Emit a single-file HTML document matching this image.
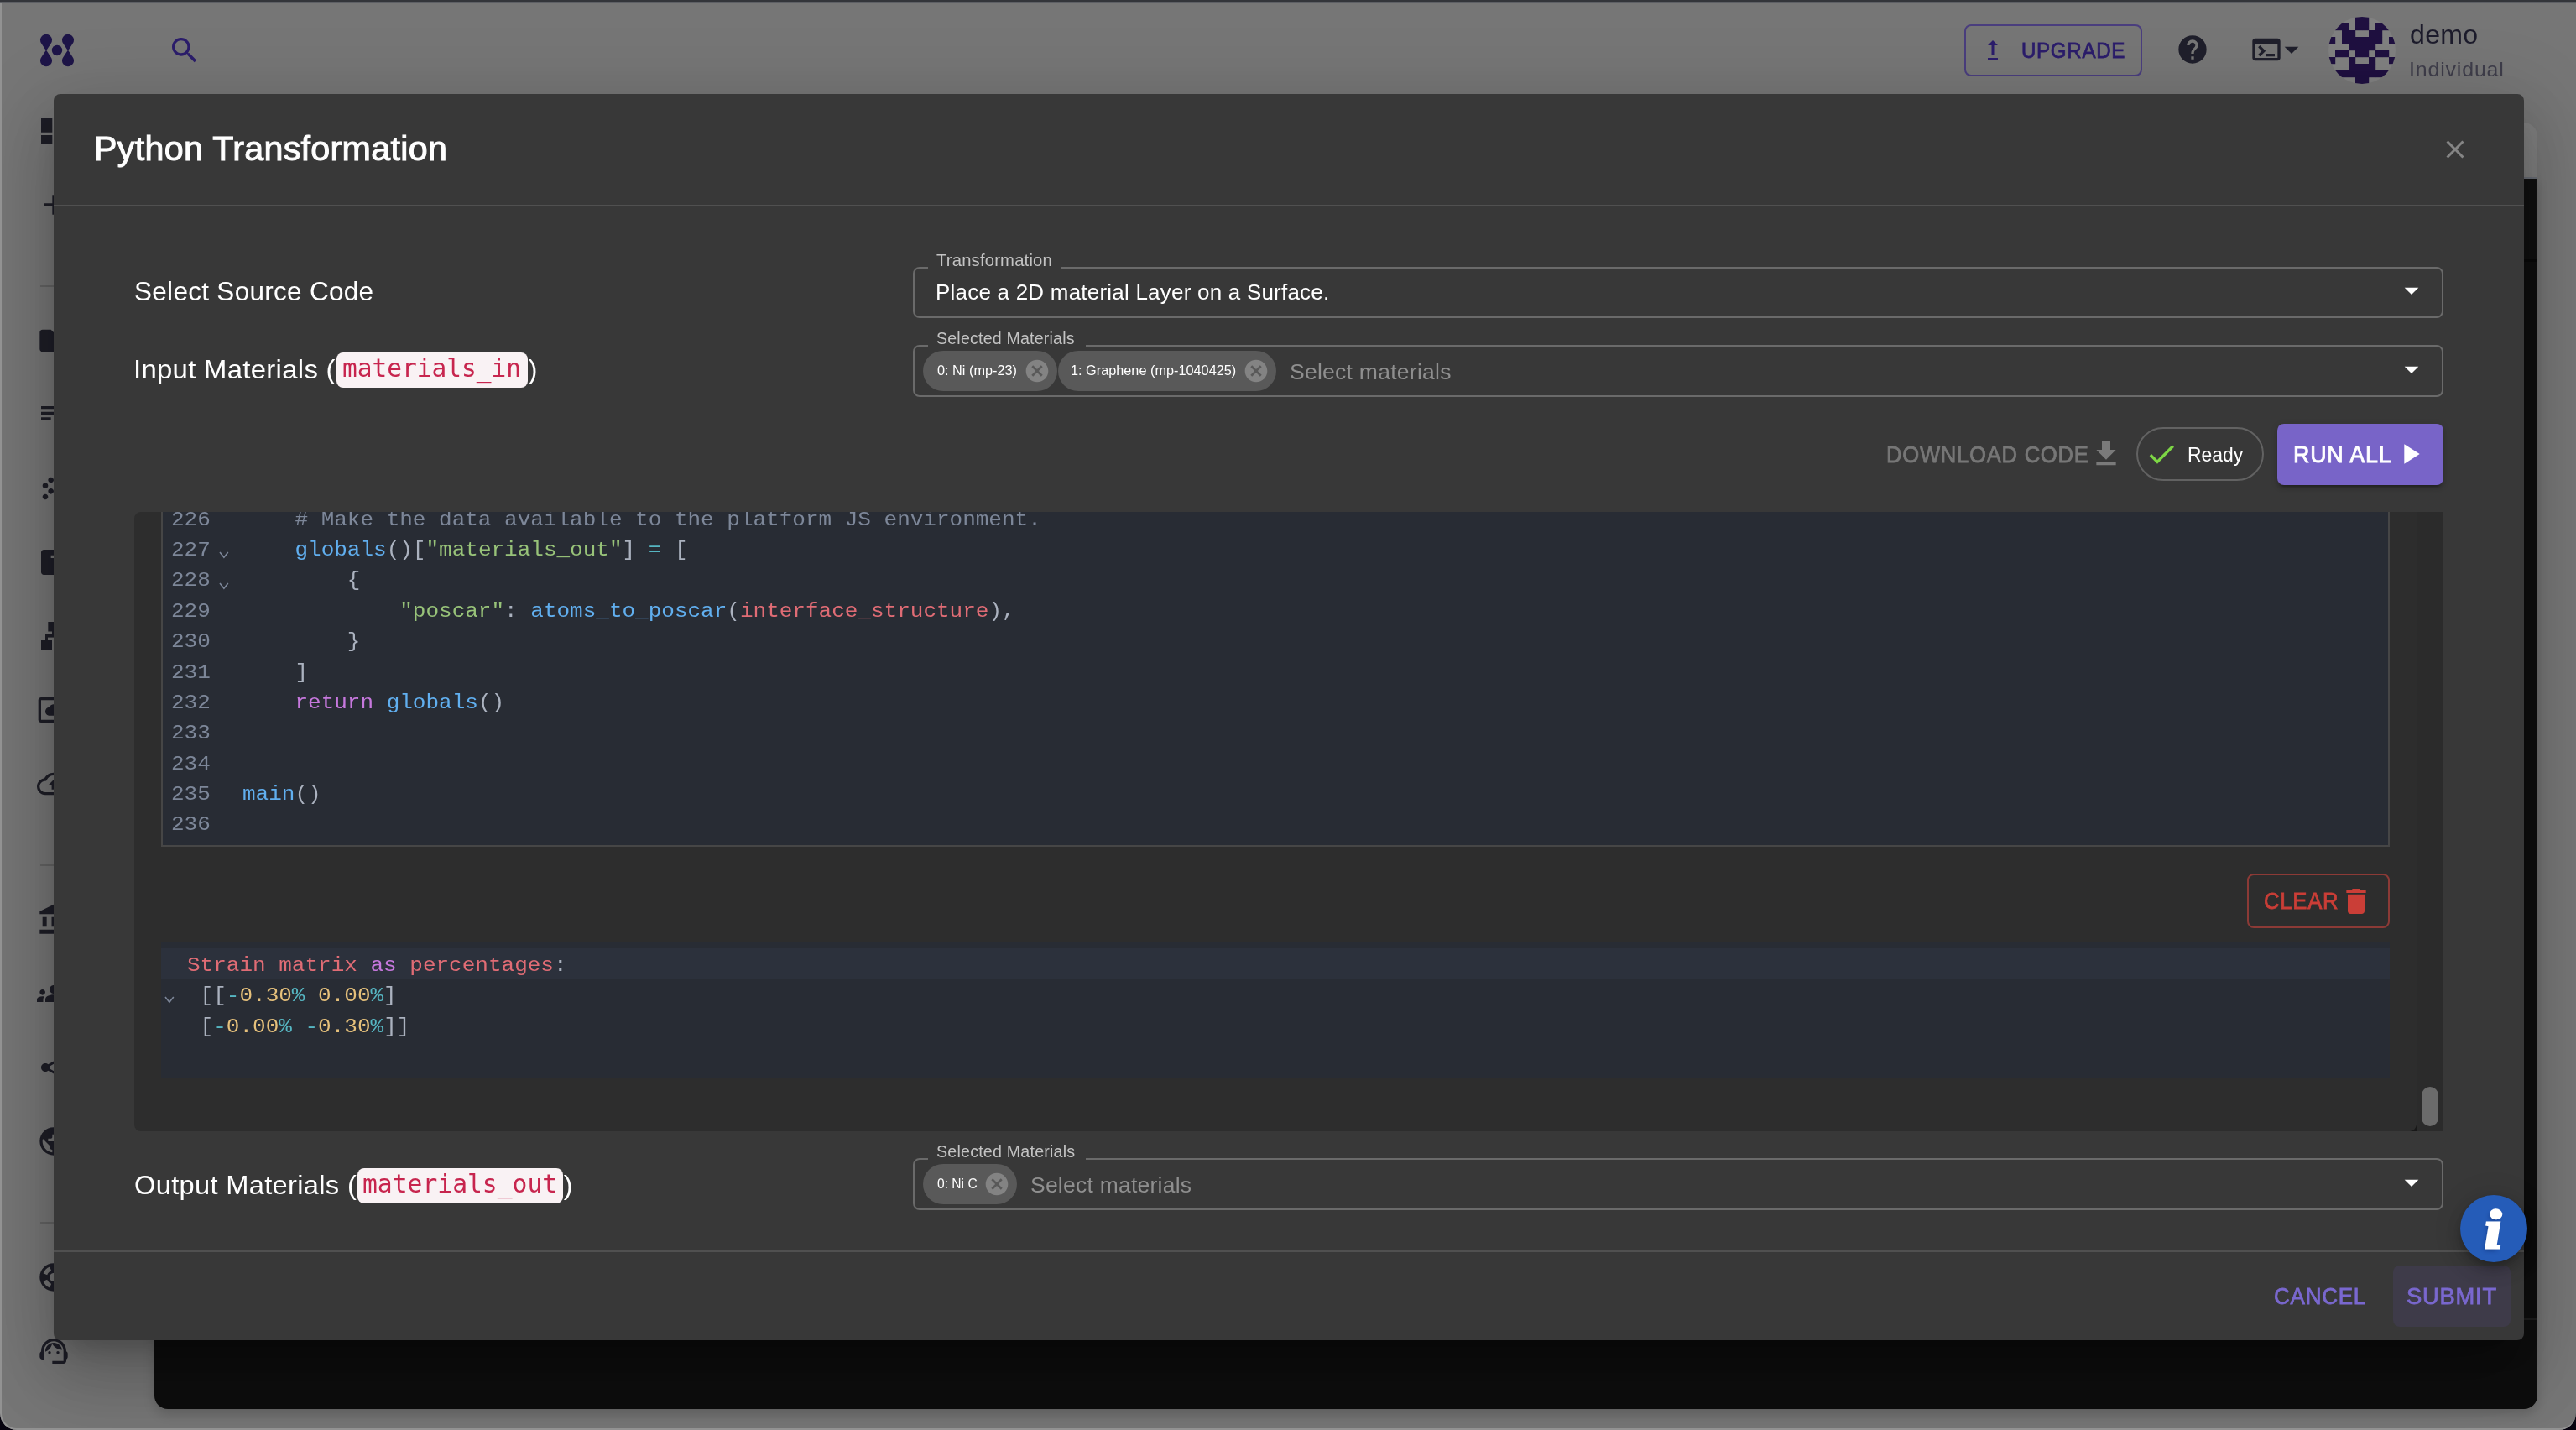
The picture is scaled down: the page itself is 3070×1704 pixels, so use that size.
<!DOCTYPE html>
<html lang="en"><head><meta charset="utf-8"><title>Python Transformation</title>
<style>
html,body{margin:0;padding:0}
body{width:3070px;height:1704px;background:#06030f;overflow:hidden;font-family:"Liberation Sans",sans-serif;position:relative}
#win{will-change:transform;position:absolute;left:0;top:0;width:3070px;height:1704px;background:#767676;border-radius:0 0 20px 20px;overflow:hidden}
#frame{position:absolute;left:0;top:4px;width:3070px;height:1700px;box-sizing:border-box;border-left:2px solid #929292;border-bottom:2px solid #929292;border-radius:0 0 20px 20px;pointer-events:none}
.b{position:absolute;box-sizing:border-box}
.ic{position:absolute;display:block;overflow:visible}
.t{position:absolute;white-space:nowrap;line-height:1;display:block;transform-origin:0 50%}
#modal{position:absolute;left:64px;top:112px;width:2944px;height:1485px;background:#383838;border-radius:8px;
 box-shadow:0 22px 30px -14px rgba(0,0,0,.2),0 48px 76px 6px rgba(0,0,0,.14),0 18px 92px 16px rgba(0,0,0,.12)}
.ed{background:#282c34;overflow:hidden;font-family:"Liberation Mono",monospace;font-size:23px;color:#abb2bf}
.ln{position:absolute;left:96.7px;height:36.37px;line-height:36.37px;white-space:pre;transform:scaleX(1.13043);transform-origin:0 0}
.no{position:absolute;left:-75.2px;width:41.4px;text-align:right;color:#7d8799}
</style></head>
<body>
<div id="win">
<div class="b" style="left:0;top:0;width:3070px;height:2px;background:#33353a"></div>
<div class="b" style="left:0;top:2px;width:3070px;height:2px;background:#5e6065"></div>
<svg class="ic" style="left:40px;top:32px" width="56" height="56" viewBox="40 32 56 56" fill="#1e1548"><path d="M55 60.4 L49.6 52.3 A7.05 7.05 0 1 1 60.4 52.3 Z"/><path d="M55 59.6 L49.6 67.7 A7.05 7.05 0 1 0 60.4 67.7 Z"/><path d="M81 60.4 L75.6 52.3 A7.05 7.05 0 1 1 86.4 52.3 Z"/><path d="M81 59.6 L75.6 67.7 A7.05 7.05 0 1 0 86.4 67.7 Z"/><circle cx="68" cy="60" r="6.2"/></svg>
<svg class="ic" style="left:200px;top:40px" width="40" height="40" viewBox="0 0 24 24" fill="#2b1d6b"><path d="M15.5 14h-.79l-.28-.27C15.41 12.59 16 11.11 16 9.5 16 5.91 13.09 3 9.5 3S3 5.91 3 9.5 5.91 16 9.5 16c1.61 0 3.09-.59 4.23-1.57l.27.28v.79l5 4.99L20.49 19l-4.99-5zm-6 0C7.01 14 5 11.99 5 9.5S7.01 5 9.5 5 14 7.01 14 9.5 11.99 14 9.5 14z"/></svg>
<div class="b" style="left:2341px;top:29px;width:212px;height:62px;border:2px solid #4a3e7e;border-radius:8px"></div>
<svg class="ic" style="left:2357px;top:42px" width="36" height="36" viewBox="0 0 24 24" fill="#2b1d6b"><path d="M16 18v2H8v-2h8zM11 7.99V16h2V7.99h3L12 4 8 7.99h3z"/></svg>
<span class="t" id="upg" style="left:2408.95px;top:47.19px;font-size:26px;color:#2b1d6b;letter-spacing:0.743px;transform:scaleX(0.9274);-webkit-text-stroke:0.8px #2b1d6b;">UPGRADE</span>
<svg class="ic" style="left:2593px;top:39px" width="40" height="40" viewBox="0 0 24 24" fill="#1f1f2b"><path d="M12 2C6.48 2 2 6.48 2 12s4.48 10 10 10 10-4.48 10-10S17.52 2 12 2zm1 17h-2v-2h2v2zm2.07-7.75l-.9.92C13.45 12.9 13 13.5 13 15h-2v-.5c0-1.1.45-2.1 1.17-2.83l1.24-1.26c.37-.36.59-.86.59-1.41 0-1.1-.9-2-2-2s-2 .9-2 2H8c0-2.21 1.79-4 4-4s4 1.79 4 4c0 .88-.36 1.68-.93 2.25z"/></svg>
<svg class="ic" style="left:2681px;top:39px" width="40" height="40" viewBox="0 0 24 24" fill="#1f1f2b"><path d="M20 4H4c-1.11 0-2 .9-2 2v12c0 1.1.89 2 2 2h16c1.1 0 2-.9 2-2V6c0-1.1-.89-2-2-2zm0 14H4V8h16v10zm-2-1h-6v-2h6v2zM7.5 17l-1.41-1.41L8.67 13l-2.59-2.59L7.5 9l4 4-4 4z"/></svg>
<svg class="ic" style="left:2711px;top:39px" width="40" height="40" viewBox="0 0 24 24" fill="#1f1f2b"><path d="M7 10l5 5 5-5z"/></svg>
<div class="b" style="left:2775px;top:20px;width:80px;height:80px;border-radius:40px;overflow:hidden;background:#808080"><svg class="ic" style="left:0;top:0" width="80" height="80" viewBox="0 0 80 80"><g fill="#1f1040"><rect x="32" y="0" width="8.2" height="8.2"/><rect x="40" y="0" width="8.2" height="8.2"/><rect x="8" y="8" width="8.2" height="8.2"/><rect x="16" y="8" width="8.2" height="8.2"/><rect x="32" y="8" width="8.2" height="8.2"/><rect x="40" y="8" width="8.2" height="8.2"/><rect x="56" y="8" width="8.2" height="8.2"/><rect x="64" y="8" width="8.2" height="8.2"/><rect x="16" y="16" width="8.2" height="8.2"/><rect x="24" y="16" width="8.2" height="8.2"/><rect x="48" y="16" width="8.2" height="8.2"/><rect x="56" y="16" width="8.2" height="8.2"/><rect x="0" y="24" width="8.2" height="8.2"/><rect x="16" y="24" width="8.2" height="8.2"/><rect x="24" y="24" width="8.2" height="8.2"/><rect x="32" y="24" width="8.2" height="8.2"/><rect x="40" y="24" width="8.2" height="8.2"/><rect x="48" y="24" width="8.2" height="8.2"/><rect x="56" y="24" width="8.2" height="8.2"/><rect x="72" y="24" width="8.2" height="8.2"/><rect x="24" y="32" width="8.2" height="8.2"/><rect x="32" y="32" width="8.2" height="8.2"/><rect x="40" y="32" width="8.2" height="8.2"/><rect x="48" y="32" width="8.2" height="8.2"/><rect x="8" y="40" width="8.2" height="8.2"/><rect x="16" y="40" width="8.2" height="8.2"/><rect x="32" y="40" width="8.2" height="8.2"/><rect x="40" y="40" width="8.2" height="8.2"/><rect x="56" y="40" width="8.2" height="8.2"/><rect x="64" y="40" width="8.2" height="8.2"/><rect x="0" y="48" width="8.2" height="8.2"/><rect x="24" y="48" width="8.2" height="8.2"/><rect x="48" y="48" width="8.2" height="8.2"/><rect x="72" y="48" width="8.2" height="8.2"/><rect x="24" y="56" width="8.2" height="8.2"/><rect x="32" y="56" width="8.2" height="8.2"/><rect x="40" y="56" width="8.2" height="8.2"/><rect x="48" y="56" width="8.2" height="8.2"/><rect x="8" y="64" width="8.2" height="8.2"/><rect x="16" y="64" width="8.2" height="8.2"/><rect x="24" y="64" width="8.2" height="8.2"/><rect x="32" y="64" width="8.2" height="8.2"/><rect x="40" y="64" width="8.2" height="8.2"/><rect x="48" y="64" width="8.2" height="8.2"/><rect x="56" y="64" width="8.2" height="8.2"/><rect x="64" y="64" width="8.2" height="8.2"/><rect x="32" y="72" width="8.2" height="8.2"/><rect x="40" y="72" width="8.2" height="8.2"/></g></svg></div>
<span class="t" id="demo" style="left:2871.60px;top:24.71px;font-size:32px;color:#1d1c2c;letter-spacing:0.300px;transform:scaleX(1.0032);">demo</span>
<span class="t" id="indiv" style="left:2870.52px;top:71.48px;font-size:24px;color:#3e3d4a;letter-spacing:0.800px;transform:scaleX(1.0392);">Individual</span>
<svg class="ic" style="left:44px;top:136px" width="40" height="40" viewBox="0 0 24 24" fill="#1e1e27"><path d="M3 13h8V3H3v10zm0 8h8v-6H3v6zm10 0h8V11h-8v10zm0-18v6h8V3h-8z"/></svg>
<svg class="ic" style="left:44px;top:224px" width="40" height="40" viewBox="0 0 24 24" fill="#1e1e27"><path d="M19 13h-6v6h-2v-6H5v-2h6V5h2v6h6v2z"/></svg>
<svg class="ic" style="left:44px;top:386px" width="40" height="40" viewBox="0 0 24 24" fill="#1e1e27"><path d="M10 4H4c-1.1 0-1.99.9-1.99 2L2 18c0 1.1.9 2 2 2h16c1.1 0 2-.9 2-2V8c0-1.1-.9-2-2-2h-8l-2-2z"/></svg>
<svg class="ic" style="left:44px;top:474px" width="40" height="40" viewBox="0 0 24 24" fill="#1e1e27"><path d="M3 10h11v2H3zm0-4h11v2H3zm0 8h7v2H3zm13-1v8l6-5z"/></svg>
<svg class="ic" style="left:44px;top:562px" width="40" height="40" viewBox="0 0 24 24" fill="#1e1e27"><path d="M10 12c-1.1 0-2 .9-2 2s.9 2 2 2 2-.9 2-2-.9-2-2-2zM6 8c-1.1 0-2 .9-2 2s.9 2 2 2 2-.9 2-2-.9-2-2-2zm0 8c-1.1 0-2 .9-2 2s.9 2 2 2 2-.9 2-2-.9-2-2-2zm12-8c1.1 0 2-.9 2-2s-.9-2-2-2-2 .9-2 2 .9 2 2 2zm-4 8c-1.1 0-2 .9-2 2s.9 2 2 2 2-.9 2-2-.9-2-2-2zm4-4c-1.1 0-2 .9-2 2s.9 2 2 2 2-.9 2-2-.9-2-2-2zm-4-4c-1.1 0-2 .9-2 2s.9 2 2 2 2-.9 2-2-.9-2-2-2zm-4-4c-1.1 0-2 .9-2 2s.9 2 2 2 2-.9 2-2-.9-2-2-2z"/></svg>
<svg class="ic" style="left:44px;top:650px" width="40" height="40" viewBox="0 0 24 24" fill="#1e1e27"><path d="M19 3H5c-1.1 0-2 .9-2 2v14c0 1.1.9 2 2 2h14c1.1 0 2-.9 2-2V5c0-1.1-.9-2-2-2zM12 9h-2V7h2v2z"/></svg>
<svg class="ic" style="left:44px;top:826px" width="40" height="40" viewBox="0 0 24 24" fill="#1e1e27"><path d="M9 16h6.5c1.38 0 2.5-1.12 2.5-2.5S16.88 11 15.5 11h-.05c-.24-1.69-1.69-3-3.45-3-1.4 0-2.6.83-3.16 2.02h-.16C7.17 10.18 6 11.45 6 13c0 1.66 1.34 3 3 3zM21 3H3c-1.1 0-2 .9-2 2v14c0 1.1.9 2 2 2h18c1.1 0 2-.9 2-2V5c0-1.1-.9-2-2-2zm0 16.01H3V4.99h18v14.02z"/></svg>
<svg class="ic" style="left:44px;top:914px" width="40" height="40" viewBox="0 0 24 24" fill="#1e1e27"><path d="M19.35 10.04C18.67 6.59 15.64 4 12 4 9.11 4 6.6 5.64 5.35 8.04 2.34 8.36 0 10.91 0 14c0 3.31 2.69 6 6 6h13c2.76 0 5-2.24 5-5 0-2.64-2.05-4.78-4.65-4.96zM19 18H6c-2.21 0-4-1.79-4-4 0-2.05 1.53-3.76 3.56-3.97l1.07-.11.5-.95C8.08 7.14 9.94 6 12 6c2.62 0 4.88 1.86 5.39 4.43l.3 1.5 1.53.11c1.56.1 2.78 1.41 2.78 2.96 0 1.65-1.35 3-3 3zM8 13h2.55v3h2.9v-3H16l-4-4z"/></svg>
<svg class="ic" style="left:44px;top:1076px" width="40" height="40" viewBox="0 0 24 24" fill="#1e1e27"><path d="M4 10h3v7H4zm6.5 0h3v7h-3zM2 19h20v3H2zm15-9h3v7h-3zm-5-9L2 6v2h20V6z"/></svg>
<svg class="ic" style="left:44px;top:1164px" width="40" height="40" viewBox="0 0 24 24" fill="#1e1e27"><path d="M12 12.75c1.63 0 3.07.39 4.24.9 1.08.48 1.76 1.56 1.76 2.73V18H6v-1.61c0-1.18.68-2.26 1.76-2.73 1.17-.52 2.61-.91 4.24-.91zM4 13c1.1 0 2-.9 2-2s-.9-2-2-2-2 .9-2 2 .9 2 2 2zm1.13 1.1c-.37-.06-.74-.1-1.13-.1-.99 0-1.93.21-2.78.58C.48 14.9 0 15.62 0 16.43V18h4.5v-1.61c0-.83.23-1.61.63-2.29zM20 13c1.1 0 2-.9 2-2s-.9-2-2-2-2 .9-2 2 .9 2 2 2zm4 3.43c0-.81-.48-1.53-1.22-1.85-.85-.37-1.79-.58-2.78-.58-.39 0-.76.04-1.13.1.4.68.63 1.46.63 2.29V18H24v-1.57zM12 6c1.66 0 3 1.34 3 3s-1.34 3-3 3-3-1.34-3-3 1.34-3 3-3z"/></svg>
<svg class="ic" style="left:44px;top:1252px" width="40" height="40" viewBox="0 0 24 24" fill="#1e1e27"><path d="M18 16.08c-.76 0-1.44.3-1.96.77L8.91 12.7c.05-.23.09-.46.09-.7s-.04-.47-.09-.7l7.05-4.11c.54.5 1.25.81 2.04.81 1.66 0 3-1.34 3-3s-1.34-3-3-3-3 1.34-3 3c0 .24.04.47.09.7L8.04 9.81C7.5 9.31 6.79 9 6 9c-1.66 0-3 1.34-3 3s1.34 3 3 3c.79 0 1.5-.31 2.04-.81l7.12 4.16c-.05.21-.08.43-.08.65 0 1.61 1.31 2.92 2.92 2.92 1.61 0 2.92-1.31 2.92-2.92s-1.31-2.92-2.92-2.92z"/></svg>
<svg class="ic" style="left:44px;top:1340px" width="40" height="40" viewBox="0 0 24 24" fill="#1e1e27"><path d="M12 2C6.48 2 2 6.48 2 12s4.48 10 10 10 10-4.48 10-10S17.52 2 12 2zm-1 17.93c-3.95-.49-7-3.85-7-7.93 0-.62.08-1.21.21-1.79L9 15v1c0 1.1.9 2 2 2v1.93zm6.9-2.54c-.26-.81-1-1.39-1.9-1.39h-1v-3c0-.55-.45-1-1-1H8v-2h2c.55 0 1-.45 1-1V7h2c1.1 0 2-.9 2-2v-.41c2.93 1.19 5 4.06 5 7.41 0 2.08-.8 3.97-2.1 5.39z"/></svg>
<svg class="ic" style="left:44px;top:1502px" width="40" height="40" viewBox="0 0 24 24" fill="#1e1e27"><path d="M12 2C6.48 2 2 6.48 2 12s4.48 10 10 10 10-4.48 10-10S17.52 2 12 2zm7.46 7.12-2.78 1.15c-.51-1.36-1.58-2.44-2.95-2.94l1.15-2.78c2.1.8 3.77 2.47 4.58 4.57zM12 15c-1.66 0-3-1.34-3-3s1.34-3 3-3 3 1.34 3 3-1.34 3-3 3zM9.13 4.54l1.17 2.78c-1.38.5-2.47 1.59-2.98 2.97L4.54 9.13c.81-2.11 2.48-3.78 4.59-4.59zM4.54 14.87l2.78-1.15c.51 1.38 1.59 2.46 2.97 2.96l-1.17 2.78c-2.1-.81-3.77-2.48-4.58-4.59zm10.34 4.59-1.15-2.78c1.37-.51 2.45-1.59 2.95-2.97l2.78 1.17c-.81 2.1-2.48 3.77-4.58 4.58z"/></svg>
<svg class="ic" style="left:44px;top:738px" width="40" height="40" viewBox="0 0 40 40" fill="#1e1e27"><rect x="13.3" y="3" width="14" height="11.5"/><rect x="5" y="25" width="13" height="11.5"/><rect x="18" y="14" width="3" height="5"/><rect x="10" y="18" width="11" height="3.6"/><rect x="10" y="18" width="3" height="8"/></svg>
<svg class="ic" style="left:44px;top:1590px" width="40" height="40" viewBox="0 0 24 24" fill="#1e1e27"><path d="M21 12.22C21 6.73 16.74 3 12 3c-4.69 0-9 3.65-9 9.28-.6.34-1 .98-1 1.72v2c0 1.1.9 2 2 2h1v-6.1c0-3.87 3.13-7 7-7s7 3.13 7 7V19h-8v2h8c1.1 0 2-.9 2-2v-1.22c.59-.31 1-.92 1-1.64v-2.3c0-.7-.41-1.31-1-1.62zM18 11.03C17.52 8.18 15.04 6 12.05 6c-3.03 0-6.29 2.51-6.03 6.45 2.47-1.01 4.33-3.21 4.86-5.89 1.31 2.63 4 4.44 7.12 4.47z"/><circle cx="9" cy="13" r="1"/><circle cx="15" cy="13" r="1"/></svg>
<div class="b" style="left:48px;top:340px;width:40px;height:2px;background:#646464"></div>
<div class="b" style="left:48px;top:1030px;width:40px;height:2px;background:#646464"></div>
<div class="b" style="left:48px;top:1456px;width:40px;height:2px;background:#646464"></div>
<div class="b" style="left:184px;top:146px;width:2840px;height:65px;border-radius:16px 16px 0 0;background:#7f7f7f"></div>
<div class="b" style="left:184px;top:211px;width:2840px;height:2px;background:#6c7078"></div>
<div class="b" style="left:184px;top:213px;width:2840px;height:1466px;border-radius:0 0 16px 16px;background:#0e0e0e;overflow:hidden;box-shadow:0 6px 14px rgba(0,0,0,.16)"><div class="b" style="left:0;top:0;width:2840px;height:96px;background:#111"></div><div class="b" style="left:0;top:96px;width:2840px;height:3px;background:#090909"></div><div class="b" style="left:0;top:1358px;width:2840px;height:2px;background:#1e1e1e"></div></div>
<div id="modal"></div>
<span class="t" id="title" style="left:112.31px;top:157.14px;font-size:40px;color:#ffffff;letter-spacing:0.300px;transform:scaleX(1.0305);-webkit-text-stroke:1.0px #ffffff;">Python Transformation</span>
<svg class="ic" style="left:2908px;top:160px" width="36" height="36" viewBox="0 0 24 24" fill="#858585"><path d="M19 6.41 17.59 5 12 10.59 6.41 5 5 6.41 10.59 12 5 17.59 6.41 19 12 13.41 17.59 19 19 17.59 13.41 12z"/></svg>
<div class="b" style="left:64px;top:244px;width:2944px;height:2px;background:#505050"></div>
<div class="b" style="left:64px;top:1490px;width:2944px;height:2px;background:#505050"></div>
<span class="t" id="l1" style="left:160.02px;top:330.71px;font-size:32px;color:#ffffff;letter-spacing:0.300px;transform:scaleX(0.9840);">Select Source Code</span>
<span class="t" id="l2" style="left:158.95px;top:423.91px;font-size:32px;color:#ffffff;letter-spacing:0.300px;transform:scaleX(1.0268);">Input Materials (</span>
<div class="b" style="left:401px;top:420px;width:228px;height:42px;border-radius:8px;background:#f9f2f4"></div>
<span class="t" id="c2" style="left:408.00px;top:425.08px;font-size:29.4px;color:#c7254e;transform:scaleX(1.0031);font-family:'DejaVu Sans Mono', 'Liberation Mono', monospace;">materials_in</span>
<span class="t" id="l2b" style="left:629.80px;top:423.91px;font-size:32px;color:#ffffff;">)</span>
<span class="t" id="l3" style="left:159.68px;top:1395.71px;font-size:32px;color:#ffffff;letter-spacing:0.300px;transform:scaleX(1.0206);">Output Materials (</span>
<div class="b" style="left:426px;top:1392px;width:245px;height:42px;border-radius:8px;background:#f9f2f4"></div>
<span class="t" id="c3" style="left:431.99px;top:1396.88px;font-size:29.4px;color:#c7254e;transform:scaleX(1.0091);font-family:'DejaVu Sans Mono', 'Liberation Mono', monospace;">materials_out</span>
<span class="t" id="l3b" style="left:671.80px;top:1395.71px;font-size:32px;color:#ffffff;">)</span>
<div class="b" style="left:1088px;top:318px;width:1824px;height:61px;border:2px solid #6a6a6a;border-radius:8px;box-sizing:border-box"></div><div class="b" style="left:1106px;top:316px;width:159px;height:6px;background:#383838"></div><span class="t" id="fl1" style="left:1116.30px;top:301.29px;font-size:19.5px;color:#c3c3c3;letter-spacing:0.183px;transform:scaleX(1.0376);">Transformation</span>
<div class="b" style="left:1088px;top:411px;width:1824px;height:62px;border:2px solid #6a6a6a;border-radius:8px;box-sizing:border-box"></div><div class="b" style="left:1106px;top:409px;width:188px;height:6px;background:#383838"></div><span class="t" id="fl2" style="left:1115.90px;top:394.09px;font-size:19.5px;color:#c3c3c3;letter-spacing:0.183px;transform:scaleX(1.0063);">Selected Materials</span>
<div class="b" style="left:1088px;top:1380px;width:1824px;height:62px;border:2px solid #6a6a6a;border-radius:8px;box-sizing:border-box"></div><div class="b" style="left:1106px;top:1378px;width:188px;height:6px;background:#383838"></div><span class="t" id="fl3" style="left:1115.70px;top:1362.99px;font-size:19.5px;color:#c3c3c3;letter-spacing:0.183px;transform:scaleX(1.0100);">Selected Materials</span>
<span class="t" id="fv1" style="left:1115.00px;top:335.49px;font-size:26px;color:#ffffff;letter-spacing:0.244px;transform:scaleX(0.9977);">Place a 2D material Layer on a Surface.</span>
<svg class="ic" style="left:2854px;top:326px" width="40" height="40" viewBox="0 0 24 24" fill="#ffffff"><path d="M7 10l5 5 5-5z"/></svg>
<svg class="ic" style="left:2854px;top:420px" width="40" height="40" viewBox="0 0 24 24" fill="#ffffff"><path d="M7 10l5 5 5-5z"/></svg>
<svg class="ic" style="left:2854px;top:1389px" width="40" height="40" viewBox="0 0 24 24" fill="#ffffff"><path d="M7 10l5 5 5-5z"/></svg>
<div class="b" style="left:1100px;top:418px;width:160px;height:48px;border-radius:24px;background:#595959"></div><span class="t" id="ch1" style="left:1116.70px;top:432.91px;font-size:17px;color:#ffffff;transform:scaleX(0.9571);">0: Ni (mp-23)</span><svg class="ic" style="left:1220px;top:426.1px" width="32" height="32" viewBox="0 0 24 24" fill="#838383"><path d="M12 2C6.47 2 2 6.47 2 12s4.47 10 10 10 10-4.47 10-10S17.53 2 12 2zm5 13.59L15.59 17 12 13.41 8.41 17 7 15.59 10.59 12 7 8.41 8.41 7 12 10.59 15.59 7 17 8.41 13.41 12 17 15.59z"/></svg>
<div class="b" style="left:1261px;top:418px;width:260px;height:48px;border-radius:24px;background:#595959"></div><span class="t" id="ch2" style="left:1275.84px;top:432.91px;font-size:17px;color:#ffffff;transform:scaleX(0.9572);">1: Graphene (mp-1040425)</span><svg class="ic" style="left:1481px;top:426.1px" width="32" height="32" viewBox="0 0 24 24" fill="#838383"><path d="M12 2C6.47 2 2 6.47 2 12s4.47 10 10 10 10-4.47 10-10S17.53 2 12 2zm5 13.59L15.59 17 12 13.41 8.41 17 7 15.59 10.59 12 7 8.41 8.41 7 12 10.59 15.59 7 17 8.41 13.41 12 17 15.59z"/></svg>
<span class="t" id="ph2" style="left:1536.98px;top:429.99px;font-size:26px;color:#8f8f8f;letter-spacing:0.244px;transform:scaleX(1.0202);">Select materials</span>
<div class="b" style="left:1100px;top:1387px;width:112px;height:48px;border-radius:24px;background:#595959"></div><span class="t" id="ch3" style="left:1116.50px;top:1401.61px;font-size:17px;color:#ffffff;transform:scaleX(0.9172);">0: Ni C</span><svg class="ic" style="left:1172.2px;top:1394.9px" width="32" height="32" viewBox="0 0 24 24" fill="#838383"><path d="M12 2C6.47 2 2 6.47 2 12s4.47 10 10 10 10-4.47 10-10S17.53 2 12 2zm5 13.59L15.59 17 12 13.41 8.41 17 7 15.59 10.59 12 7 8.41 8.41 7 12 10.59 15.59 7 17 8.41 13.41 12 17 15.59z"/></svg>
<span class="t" id="ph3" style="left:1227.98px;top:1398.69px;font-size:26px;color:#8f8f8f;letter-spacing:0.244px;transform:scaleX(1.0180);">Select materials</span>
<span class="t" id="dl" style="left:2248.44px;top:528.32px;font-size:27.5px;color:#777777;letter-spacing:0.786px;transform:scaleX(0.9319);-webkit-text-stroke:0.8px #777777;">DOWNLOAD CODE</span>
<svg class="ic" style="left:2490px;top:521px" width="40" height="40" viewBox="0 0 24 24" fill="#7a7a7a"><path d="M19 9h-4V3H9v6H5l7 7 7-7zM5 18v2h14v-2H5z"/></svg>
<div class="b" style="left:2546px;top:509px;width:152px;height:64px;border:2px solid #626262;border-radius:32px;box-sizing:border-box"></div>
<svg class="ic" style="left:2556px;top:521px" width="40" height="40" viewBox="0 0 24 24" fill="#7dd645"><path d="M9 16.17 4.83 12l-1.42 1.41L9 19 21 7l-1.41-1.41z"/></svg>
<span class="t" id="ready" style="left:2606.55px;top:529.68px;font-size:24px;color:#ffffff;transform:scaleX(0.9550);">Ready</span>
<div class="b" style="left:2714px;top:505px;width:198px;height:73px;border-radius:8px;background:#7864c8;box-shadow:0 6px 2px -4px rgba(0,0,0,.2),0 4px 4px 0 rgba(0,0,0,.14),0 2px 10px 0 rgba(0,0,0,.12)"></div>
<span class="t" id="run" style="left:2732.95px;top:528.32px;font-size:27.5px;color:#ffffff;letter-spacing:0.786px;transform:scaleX(0.9775);-webkit-text-stroke:0.8px #ffffff;">RUN ALL</span>
<svg class="ic" style="left:2852px;top:521px" width="40" height="40" viewBox="0 0 24 24" fill="#ffffff"><path d="M8 5v14l11-7z"/></svg>
<div class="b" style="left:160px;top:610px;width:2752px;height:738px;border-radius:8px 0 0 8px;background:#2d2d2d"></div>
<div class="b" style="left:2880px;top:610px;width:32px;height:738px;background:#2b2b2b"></div>
<div class="b" style="left:2886px;top:1295px;width:20px;height:47px;border-radius:10px;background:#6b6b6b"></div>
<svg class="ic" style="left:2868px;top:1336px" width="12" height="12" viewBox="0 0 12 12"><path d="M12 4 V12 H4 Q11 11 12 4Z" fill="#181818"/></svg>
<div class="b ed" style="left:192px;top:610px;width:2656px;height:399px"><div class="ln" style="top:-8.32px"><span class="no">226</span>    <span style="color:#7d8799"># Make the data available to the platform JS environment.</span></div><div class="ln" style="top:28.05px"><span class="no">227</span>    <span style="color:#61afef">globals</span><span style="color:#abb2bf">()[</span><span style="color:#98c379">&quot;materials_out&quot;</span><span style="color:#abb2bf">] </span><span style="color:#56b6c2">=</span><span style="color:#abb2bf"> [</span></div><svg class="ic" style="left:68.6px;top:47.2px" width="12" height="9" viewBox="0 0 12 9"><path d="M1 1 L5.9 7.2 L10.8 1" fill="none" stroke="#7d8799" stroke-width="1.6"/></svg><div class="ln" style="top:64.42px"><span class="no">228</span>        <span style="color:#abb2bf">{</span></div><svg class="ic" style="left:68.6px;top:83.5px" width="12" height="9" viewBox="0 0 12 9"><path d="M1 1 L5.9 7.2 L10.8 1" fill="none" stroke="#7d8799" stroke-width="1.6"/></svg><div class="ln" style="top:100.79px"><span class="no">229</span>            <span style="color:#98c379">&quot;poscar&quot;</span><span style="color:#abb2bf">: </span><span style="color:#61afef">atoms_to_poscar</span><span style="color:#abb2bf">(</span><span style="color:#e06c75">interface_structure</span><span style="color:#abb2bf">),</span></div><div class="ln" style="top:137.16px"><span class="no">230</span>        <span style="color:#abb2bf">}</span></div><div class="ln" style="top:173.53px"><span class="no">231</span>    <span style="color:#abb2bf">]</span></div><div class="ln" style="top:209.90px"><span class="no">232</span>    <span style="color:#c678dd">return</span> <span style="color:#61afef">globals</span><span style="color:#abb2bf">()</span></div><div class="ln" style="top:246.27px"><span class="no">233</span></div><div class="ln" style="top:282.64px"><span class="no">234</span></div><div class="ln" style="top:319.01px"><span class="no">235</span><span style="color:#61afef">main</span><span style="color:#abb2bf">()</span></div><div class="ln" style="top:355.38px"><span class="no">236</span></div><div class="b" style="left:0;top:0;width:2px;height:399px;background:#464646"></div><div class="b" style="left:2654px;top:0;width:2px;height:399px;background:#464646"></div><div class="b" style="left:0;top:397px;width:2656px;height:2px;background:#464646"></div></div>
<div class="b" style="left:2678px;top:1041px;width:170px;height:65px;border:2px solid #8c3a36;border-radius:8px;box-sizing:border-box"></div>
<span class="t" id="clear" style="left:2698.47px;top:1060.02px;font-size:27.5px;color:#ca3e37;letter-spacing:0.786px;transform:scaleX(0.9335);-webkit-text-stroke:0.8px #ca3e37;">CLEAR</span>
<svg class="ic" style="left:2788px;top:1054px" width="40" height="40" viewBox="0 0 24 24" fill="#ca3e37"><path d="M6 19c0 1.1.9 2 2 2h8c1.1 0 2-.9 2-2V7H6v12zM19 4h-3.5l-1-1h-5l-1 1H5v2h14V4z"/></svg>
<div class="b ed" style="left:192px;top:1122.4px;width:2656px;height:161.2px"><div class="b" style="left:0;top:7.6px;width:2656px;height:36.2px;background:#2c313c"></div><div class="ln" style="top:10.68px;left:31.3px"><span style="color:#e06c75">Strain</span> <span style="color:#e06c75">matrix</span> <span style="color:#c678dd">as</span> <span style="color:#e06c75">percentages</span><span style="color:#abb2bf">:</span></div><div class="ln" style="top:47.05px;left:31.3px"> <span style="color:#abb2bf">[[</span><span style="color:#56b6c2">-</span><span style="color:#e5c07b">0.30</span><span style="color:#56b6c2">%</span> <span style="color:#e5c07b">0.00</span><span style="color:#56b6c2">%</span><span style="color:#abb2bf">]</span></div><div class="ln" style="top:83.42px;left:31.3px"> <span style="color:#abb2bf">[</span><span style="color:#56b6c2">-</span><span style="color:#e5c07b">0.00</span><span style="color:#56b6c2">%</span> <span style="color:#56b6c2">-</span><span style="color:#e5c07b">0.30</span><span style="color:#56b6c2">%</span><span style="color:#abb2bf">]]</span></div><svg class="ic" style="left:4.2px;top:64.8px" width="12" height="9" viewBox="0 0 12 9"><path d="M1 1 L5.9 7.2 L10.8 1" fill="none" stroke="#7d8799" stroke-width="1.6"/></svg></div>
<span class="t" id="cancel" style="left:2709.85px;top:1531.22px;font-size:27.5px;color:#7a68cf;letter-spacing:0.786px;transform:scaleX(0.9467);-webkit-text-stroke:0.8px #7a68cf;">CANCEL</span>
<div class="b" style="left:2852px;top:1508px;width:140px;height:73px;border-radius:8px;background:#3e3b49"></div>
<span class="t" id="submit" style="left:2868.01px;top:1531.22px;font-size:27.5px;color:#7a68cf;letter-spacing:0.786px;transform:scaleX(0.9942);-webkit-text-stroke:0.8px #7a68cf;">SUBMIT</span>
<div class="b" style="left:2932px;top:1424px;width:80px;height:80px;border-radius:40px;background:#255cb8;box-shadow:0 6px 10px -2px rgba(0,0,0,.2),0 12px 20px 0 rgba(0,0,0,.14),0 2px 36px 0 rgba(0,0,0,.12)"></div>
<span class="t" id="fab" style="left:2962.0px;top:1432.5px;font-family:'Liberation Serif',serif;font-style:italic;font-weight:700;font-size:65px;line-height:65px;color:#fff;-webkit-text-stroke:3.2px #fff;transform:scaleX(1.17) skewX(2deg);transform-origin:50% 50%;text-shadow:-2px 3px 5px rgba(5,20,70,.45)">i</span>
<div id="frame"></div></div>
</body></html>
